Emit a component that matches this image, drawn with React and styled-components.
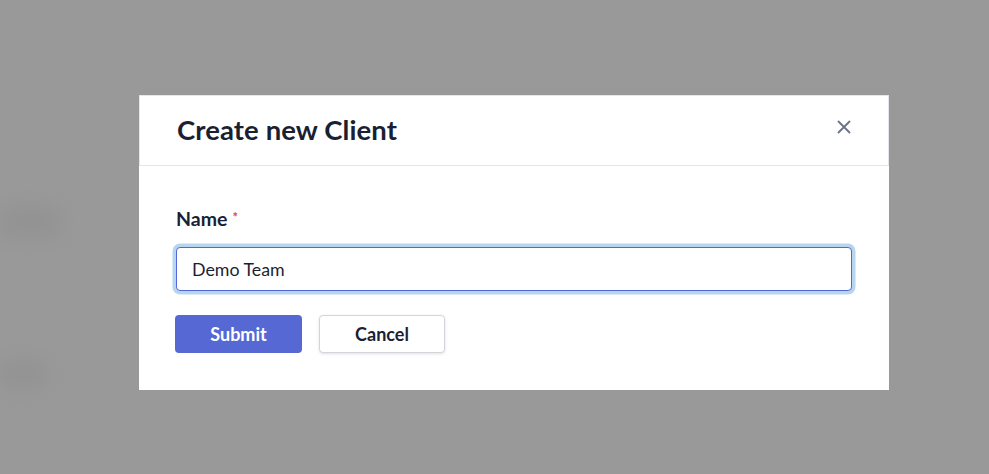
import React from 'react';
import styled, { createGlobalStyle } from 'styled-components';

const GlobalStyle = createGlobalStyle`
    html, body {
        margin: 0;
        padding: 0;
        height: 100%;
        overflow: hidden;
        font-family: "Lato", "Open Sans", sans-serif;
    }
`;

const Page = styled.div`
    width: 100vw;
    height: 100vh;
    background: #999999;
    display: flex;
    flex-direction: column;
    padding: 205px 0 0 0;
    box-sizing: border-box;
    gap: 120px;
`;

const GhostRow = styled.div`
    display: flex;
    gap: ${p => p.gap || 0}px;
    padding-left: ${p => p.left || 0}px;
`;

const Ghost = styled.div`
    width: ${p => p.w}px;
    height: ${p => p.h}px;
    background: #8c8c8c;
    border-radius: 8px;
    filter: blur(9px);
    opacity: ${p => p.o || 0.45};
`;

const Overlay = styled.div`
    position: fixed;
    inset: 0;
    display: flex;
    align-items: flex-start;
    padding: 95px 0 0 139px;
`;

const Modal = styled.div`
    width: 750px;
    background: #ffffff;
    display: flex;
    flex-direction: column;
`;

const Header = styled.div`
    height: 71px;
    box-sizing: border-box;
    border: 1px solid #e3e6ed;
    border-bottom-color: #e2e4e9;
    display: flex;
    align-items: center;
    justify-content: space-between;
    padding: 0 36px 2px 37px;
`;

const Title = styled.h2`
    margin: 0;
    font-size: 27.5px;
    font-weight: 700;
    color: #1b1f33;
    letter-spacing: 0.1px;
`;

const CloseButton = styled.button`
    border: none;
    background: none;
    padding: 0;
    width: 16px;
    height: 16px;
    display: flex;
    align-items: center;
    justify-content: center;
    cursor: pointer;
    margin-bottom: 6px;
`;

const Body = styled.div`
    padding: 42px 37px 37px 36px;
    display: flex;
    flex-direction: column;
`;

const Label = styled.label`
    font-size: 19.5px;
    font-weight: 700;
    color: #1b1f33;
    line-height: 22px;
    display: flex;
    align-items: center;
    gap: 5px;
    padding-left: 1px;
`;

const Required = styled.span`
    color: #d1406f;
    font-size: 13px;
    line-height: 13px;
    margin-top: -3px;
`;

const Input = styled.input`
    margin: 17px 0 0 1px;
    height: 44px;
    box-sizing: border-box;
    border: 1px solid #5367d6;
    border-radius: 4px;
    box-shadow: 0 0 0 3.5px #b6d5ee;
    padding: 0 15px;
    font-family: "Lato", "Open Sans", sans-serif;
    font-size: 17.8px;
    color: #1b1f33;
    outline: none;
`;

const Actions = styled.div`
    display: flex;
    gap: 17px;
    margin-top: 24px;
`;

const Button = styled.button`
    width: ${p => p.width}px;
    height: 38px;
    border-radius: 4px;
    font-family: "Lato", "Open Sans", sans-serif;
    font-size: 18px;
    font-weight: 700;
    cursor: pointer;
    border: ${p => (p.primary ? 'none' : '1px solid #d3d5da')};
    background: ${p => (p.primary ? '#5568d4' : '#ffffff')};
    color: ${p => (p.primary ? '#ffffff' : '#1b1f33')};
    box-shadow: ${p => (p.primary ? 'none' : '0 1px 3px rgba(0,0,0,0.12)')};
`;

export default function App() {
    return (
        <>
            <GlobalStyle />
            <Page>
                <GhostRow>
                    <Ghost w={60} h={34} />
                </GhostRow>
                <GhostRow>
                    <Ghost w={45} h={30} />
                </GhostRow>
            </Page>
            <Overlay>
                <Modal>
                    <Header>
                        <Title>Create new Client</Title>
                        <CloseButton aria-label="Close">
                            <svg width="14" height="14" viewBox="0 0 14 14">
                                <path d="M1.5 1.5 L12.5 12.5 M12.5 1.5 L1.5 12.5" stroke="#6b7285" strokeWidth="1.8" strokeLinecap="round" />
                            </svg>
                        </CloseButton>
                    </Header>
                    <Body>
                        <Label>
                            Name <Required>*</Required>
                        </Label>
                        <Input defaultValue="Demo Team" />
                        <Actions>
                            <Button primary width={127}>Submit</Button>
                            <Button width={126}>Cancel</Button>
                        </Actions>
                    </Body>
                </Modal>
            </Overlay>
        </>
    );
}
